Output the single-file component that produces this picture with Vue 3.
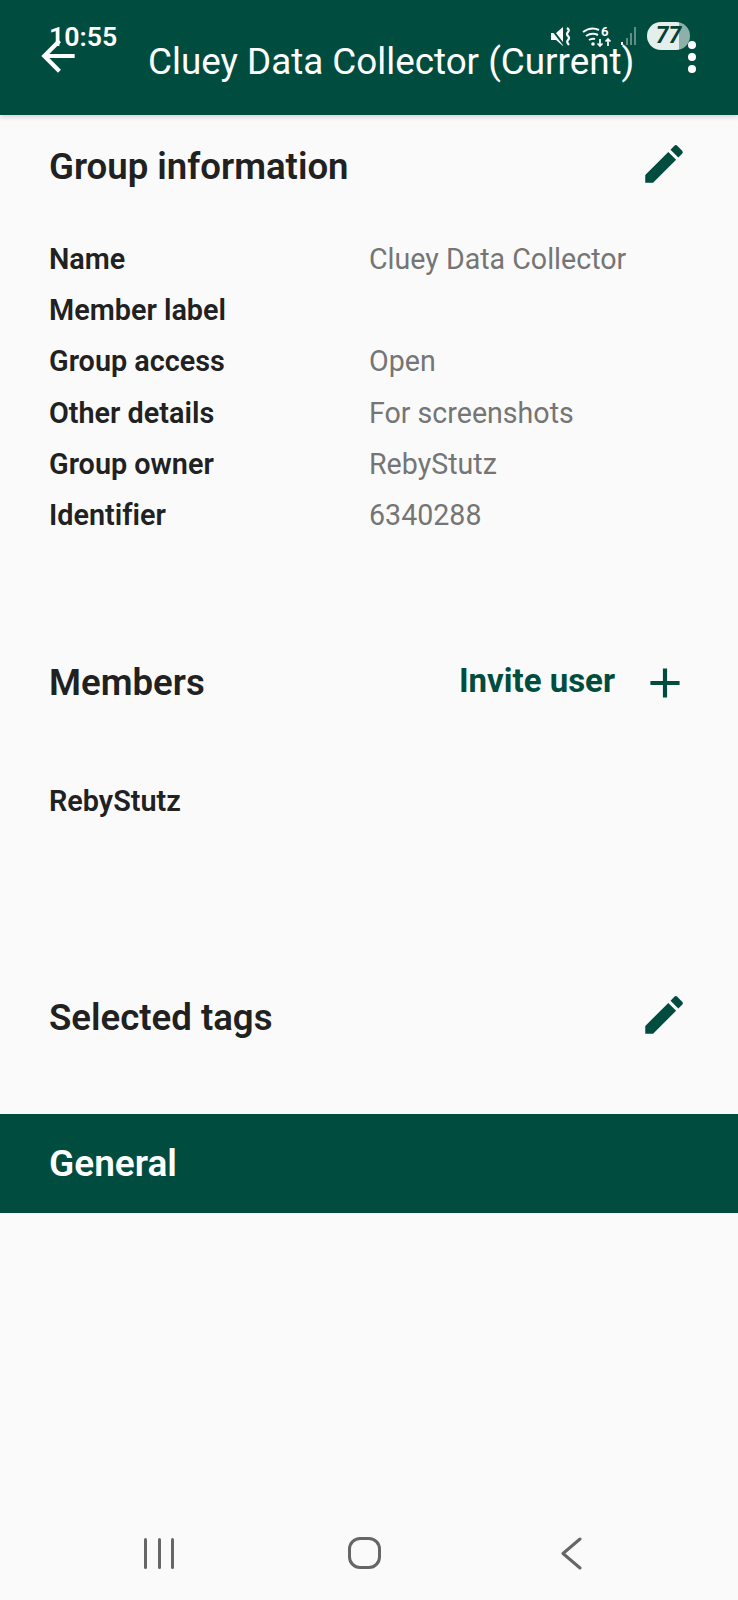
<script setup>
const rows = [
  ['Name', 'Cluey Data Collector'],
  ['Member label', ''],
  ['Group access', 'Open'],
  ['Other details', 'For screenshots'],
  ['Group owner', 'RebyStutz'],
  ['Identifier', '6340288'],
]
const editPath = 'M3 17.25V21h3.75L17.81 9.94l-3.75-3.75L3 17.25zM20.71 7.04a1 1 0 0 0 0-1.41l-2.34-2.34a1 1 0 0 0-1.41 0l-1.83 1.83 3.75 3.75 1.83-1.83z'
</script>

<template>
  <div class="page">
    <header class="appbar">
      <svg class="back" viewBox="0 0 24 24"><path d="M20 11H7.83l5.59-5.59L12 4l-8 8 8 8 1.41-1.41L7.83 13H20v-2z" /></svg>
      <h1 class="apptitle">Cluey Data Collector (Current)</h1>
      <div class="kebab"><i></i><i></i><i></i></div>

      <div class="status">
        <span class="time">10:55</span>
        <svg class="mute" viewBox="0 0 21 19"><path d="M0 6h5l7-6v19l-7-6H0z" /><path d="M0 1l13 17" stroke="#004d40" stroke-width="2" /><path d="M16 1q3 2 1 4t0 4 0 4 1 5" fill="none" stroke="#fff" stroke-width="2.2" /></svg>
        <svg class="wifi" viewBox="0 0 31 22">
          <path d="M1 7q8-6 16-2M4 11q6-4 12-1M7 15q3-2 6-1" fill="none" stroke="#fff" stroke-width="2" />
          <circle cx="11" cy="19" r="1.8" fill="#fff" />
          <path d="M18 14v7m-2.5-2.5l2.5 2.5 2.5-2.5M26 21v-7m-2.5 2.5l2.5-2.5 2.5 2.5" fill="none" stroke="#fff" stroke-width="1.7" />
        </svg>
        <span class="six">6</span>
        <svg class="signal" viewBox="0 0 16 20">
          <rect x="0" y="16" width="2" height="3" fill="#fff" />
          <rect x="5" y="12" width="2" height="7" fill="#5f8f84" />
          <rect x="9" y="7" width="2" height="12" fill="#5f8f84" />
          <rect x="13" y="1" width="2" height="18" fill="#5f8f84" />
        </svg>
        <div class="battery"><span>77</span></div>
      </div>
    </header>

    <main class="content">
      <section class="info">
        <div class="head">
          <h2>Group information</h2>
          <svg class="icon" viewBox="0 0 24 24"><path :d="editPath" /></svg>
        </div>
        <dl class="rows">
          <div v-for="r in rows" :key="r[0]" class="row">
            <dt>{{ r[0] }}</dt>
            <dd>{{ r[1] }}</dd>
          </div>
        </dl>
      </section>

      <section class="members">
        <div class="head">
          <h2>Members</h2>
          <div class="invite">
            <span class="invite-label">Invite user</span>
            <svg class="icon" viewBox="0 0 24 24"><path d="M19 13h-6v6h-2v-6H5v-2h6V5h2v6h6v2z" /></svg>
          </div>
        </div>
        <p class="member">RebyStutz</p>
      </section>

      <section class="tags">
        <div class="head">
          <h2>Selected tags</h2>
          <svg class="icon" viewBox="0 0 24 24"><path :d="editPath" /></svg>
        </div>
      </section>

      <div class="general">General</div>
    </main>

    <nav class="navbar">
      <div class="recents"><i></i><i></i><i></i></div>
      <div class="home"></div>
      <svg class="chev" viewBox="0 0 22 33"><path d="M20 2L3 16.5 20 31" /></svg>
    </nav>
  </div>
</template>

<style scoped>
.page {
  width: 738px;
  height: 1600px;
  background: #fafafa;
  display: flex;
  flex-direction: column;
  font-family: Roboto, "Noto Sans", sans-serif;
  color: #212121;
  overflow: hidden;
}
.appbar {
  position: relative;
  height: 115px;
  flex: none;
  background: #004d40;
  box-shadow: 0 2px 5px rgba(0, 0, 0, 0.16);
  display: flex;
  align-items: center;
  color: #fff;
  padding-top: 7px;
  box-sizing: border-box;
}
.back {
  width: 50px;
  height: 50px;
  margin-left: 33px;
  margin-top: -10px;
  fill: #fff;
  flex: none;
}
.apptitle {
  margin: 0 0 0 65px;
  font-size: 36.8px;
  font-weight: 400;
  white-space: nowrap;
}
.kebab {
  position: absolute;
  left: 688px;
  top: 41px;
  display: flex;
  flex-direction: column;
  gap: 4px;
}
.kebab i {
  width: 8px;
  height: 8px;
  border-radius: 50%;
  background: #fff;
}
.status .time {
  position: absolute;
  left: 49px;
  top: 22px;
  font-size: 26.7px;
  font-weight: 600;
  line-height: 30px;
}
.mute {
  position: absolute;
  left: 551px;
  top: 27px;
  width: 21px;
  height: 19px;
  fill: #fff;
}
.wifi {
  position: absolute;
  left: 582px;
  top: 25px;
  width: 31px;
  height: 22px;
}
.six {
  position: absolute;
  left: 601px;
  top: 25px;
  font-size: 13px;
  line-height: 13px;
  font-weight: 700;
}
.signal {
  position: absolute;
  left: 621px;
  top: 26px;
  width: 16px;
  height: 20px;
}
.battery {
  position: absolute;
  left: 647px;
  top: 22px;
  width: 43px;
  height: 28px;
  border-radius: 14px;
  background: linear-gradient(90deg, #e4eeeb 0 75%, #8db0a8 75% 100%);
  color: #063f35;
  font-size: 23px;
  font-weight: 700;
  font-style: italic;
  line-height: 28px;
  text-align: center;
}
.content {
  flex: 1;
  display: flex;
  flex-direction: column;
}
.head {
  display: flex;
  justify-content: space-between;
  align-items: center;
  padding: 0 49px;
  height: 52px;
}
.head h2 {
  margin: 0;
  font-size: 36.6px;
  font-weight: 600;
}
.icon {
  width: 50px;
  height: 50px;
  fill: #004d40;
  flex: none;
  margin-right: -1px;
}
.info {
  padding-top: 25px;
}
.info .icon,
.tags .icon {
  margin-top: -5px;
  margin-right: 0;
}
.rows {
  margin: 41px 0 0;
  padding: 0 49px;
}
.row {
  display: flex;
  height: 51.3px;
  align-items: center;
  font-size: 28.8px;
  font-variant-ligatures: none;
}
.row dt {
  width: 320px;
  font-weight: 600;
}
.row dd {
  margin: 0;
  font-size: 28.6px;
  color: #757575;
}
.members {
  margin-top: 116px;
}
.invite {
  display: flex;
  align-items: center;
  gap: 25px;
  color: #004d40;
  font-size: 33px;
  font-weight: 700;
}
.invite-label {
  margin-top: -5px;
}
.member {
  margin: 76px 0 0;
  padding: 0 49px;
  font-size: 28.8px;
  font-weight: 600;
  line-height: 32px;
}
.tags {
  margin-top: 175px;
}
.general {
  margin-top: 70px;
  height: 99px;
  background: #004d40;
  color: #fff;
  font-size: 37px;
  font-weight: 600;
  display: flex;
  align-items: center;
  padding: 0 49px;
}
.navbar {
  flex: none;
  height: 94px;
  position: relative;
  display: flex;
  align-items: center;
}
.recents {
  margin-left: 144px;
  display: flex;
  gap: 10.5px;
}
.recents i {
  width: 3px;
  height: 31px;
  border-radius: 1.5px;
  background: #666;
}
.home {
  margin-left: 174px;
  width: 33px;
  height: 32px;
  box-sizing: border-box;
  border: 3px solid #666;
  border-radius: 12px;
}
.chev {
  margin-left: 179px;
  width: 22px;
  height: 33px;
  fill: none;
  stroke: #666;
  stroke-width: 3;
  stroke-linecap: round;
  stroke-linejoin: round;
}
</style>

<style>
html, body { margin: 0; background: #fafafa; }
</style>
